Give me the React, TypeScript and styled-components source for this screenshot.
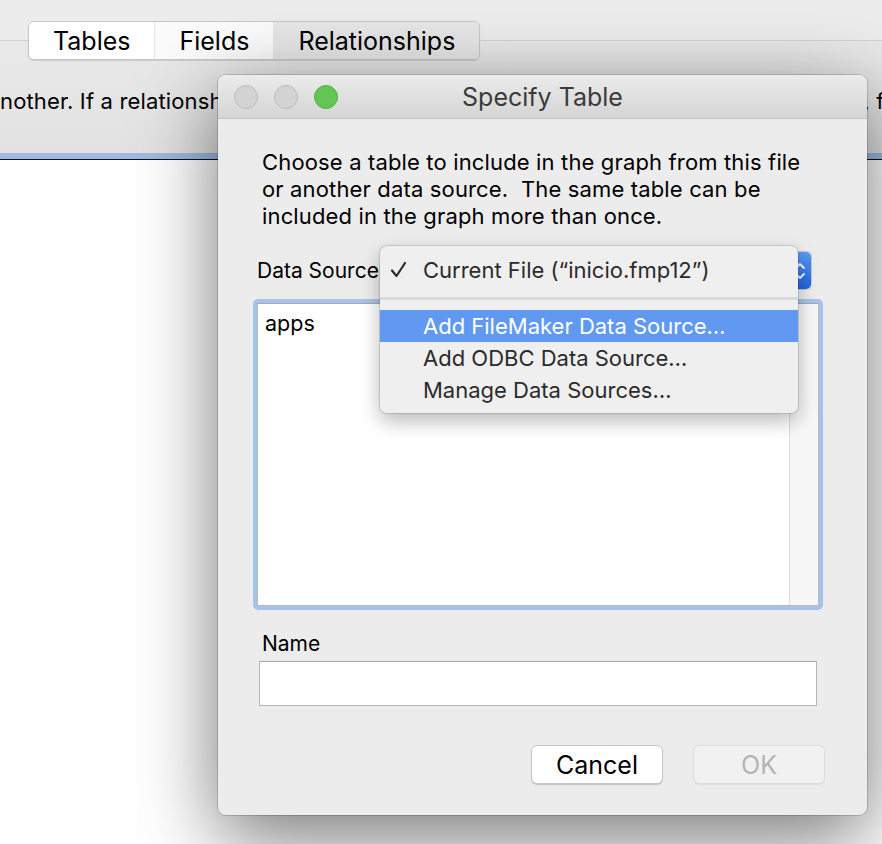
import React from "react";
import styled, { createGlobalStyle } from "styled-components";

const GlobalStyle = createGlobalStyle`
  html, body { margin: 0; padding: 0; }
  body {
    background: #ececec;
    font-family: Inter, "Noto Sans", "Liberation Sans", sans-serif;
    color: #000;
    -webkit-font-smoothing: antialiased;
  }
`;

const Page = styled.div`
  position: relative;
  width: 882px;
  height: 844px;
  overflow: hidden;
  display: flex;
  flex-direction: column;
  background: #fff;
`;

const Header = styled.div`
  height: 153px;
  display: flex;
  flex-direction: column;
  background:
    linear-gradient(#ececec 0, #ececec 40px, #d2d2d2 40px, #d2d2d2 41px, #e9e9e9 41px, #e2e2e2 153px);
`;

const Segmented = styled.div`
  margin: 21px 0 0 28px;
  align-self: flex-start;
  display: flex;
  height: 39px;
  border: 1px solid #c6c6c6;
  border-radius: 6px;
  overflow: hidden;
  box-shadow: 0 1px 1px rgba(0, 0, 0, 0.12);
  box-sizing: border-box;
`;

const Segment = styled.div<{ $selected?: boolean; $tint?: string }>`
  display: flex;
  align-items: center;
  padding: 0 24px;
  font-size: 25px;
  background: ${(p) => (p.$selected ? "#e6e6e6" : p.$tint || "#fff")};
  border-left: 1px solid #e4e4e4;
  &:first-child { border-left: none; }
`;

const InfoLine = styled.div`
  margin-top: 28px;
  display: flex;
  justify-content: space-between;
  white-space: nowrap;
  overflow: hidden;
  font-size: 22px;
  letter-spacing: 0.15px;
  line-height: 26px;
`;

const InfoTail = styled.span`
  margin-right: -8px;
`;

const BlueRule = styled.div`
  height: 6px;
  background: #9dbbe4;
  border-bottom: 1px solid #111;
`;

const Canvas = styled.div`
  flex: 1;
  background: #fff;
`;

const Dialog = styled.div`
  position: absolute;
  left: 218px;
  top: 75px;
  width: 649px;
  height: 740px;
  border-radius: 8px;
  background: #ececec;
  box-shadow: 0 0 0 1px rgba(0, 0, 0, 0.16), 0 22px 80px rgba(0, 0, 0, 0.55);
  display: flex;
  flex-direction: column;
`;

const TitleBar = styled.div`
  height: 44px;
  display: grid;
  grid-template-columns: 1fr auto 1fr;
  align-items: center;
  border-radius: 8px 8px 0 0;
  background: linear-gradient(#ebebeb, #d5d5d5);
  border-bottom: 1px solid #c4c4c4;
  box-sizing: border-box;
`;

const Lights = styled.div`
  display: flex;
  gap: 16px;
  padding-left: 16px;
`;

const Light = styled.div<{ $color: string; $edge: string }>`
  width: 24px;
  height: 24px;
  border-radius: 50%;
  box-sizing: border-box;
  background: ${(p) => p.$color};
  border: 1px solid ${(p) => p.$edge};
`;

const Title = styled.div`
  font-size: 25px;
  color: #3b3b3b;
  margin-top: 1px;
`;

const Body = styled.div`
  flex: 1;
  display: flex;
  flex-direction: column;
  padding-top: 30px;
`;

const Description = styled.p`
  margin: 0 0 0 44px;
  font-size: 22px;
  letter-spacing: 0.15px;
  line-height: 27px;
`;

const SourceRow = styled.div`
  margin: 22px 56px 0 39px;
  display: flex;
  align-items: center;
  gap: 10px;
  height: 37px;
`;

const Label = styled.div<{ $indent?: number; $top?: number }>`
  font-size: 21px;
  line-height: 24px;
  margin-left: ${(p) => p.$indent || 0}px;
  margin-top: ${(p) => p.$top || 0}px;
  white-space: nowrap;
`;

const Popup = styled.div`
  flex: 1;
  height: 37px;
  display: flex;
  justify-content: flex-end;
  background: #fff;
  border-radius: 5px;
  box-shadow: 0 0 0 1px #c8c8c8;
`;

const Stepper = styled.div`
  width: 22px;
  height: 37px;
  border-radius: 5px;
  background: linear-gradient(#5a9af7, #1f63df);
  display: flex;
  align-items: center;
  justify-content: center;
`;

const ListRing = styled.div`
  margin: 10px 44px 0 35px;
  height: 311px;
  border: 4px solid #a4c3ed;
  border-radius: 5px;
  box-sizing: border-box;
  display: flex;
  background: #fff;
`;

const ListInner = styled.div`
  flex: 1;
  display: flex;
  border: 1px solid #b9b9b9;
  border-top-color: #a9a9a9;
`;

const ListItems = styled.div`
  flex: 1;
  padding: 6px 7px;
  font-size: 21.5px;
  line-height: 26px;
`;

const Scrollbar = styled.div`
  width: 28px;
  background: #f7f7f7;
  border-left: 1px solid #dedede;
`;

const NameInput = styled.div`
  margin: 5px 50px 0 41px;
  height: 45px;
  box-sizing: border-box;
  background: #fff;
  border: 1px solid #b6b6b6;
  border-top-color: #a8a8a8;
`;

const Buttons = styled.div`
  margin: 39px 42px 0 0;
  display: flex;
  justify-content: flex-end;
  gap: 30px;
`;

const Button = styled.div<{ $disabled?: boolean }>`
  width: 132px;
  height: 39px;
  box-sizing: border-box;
  display: flex;
  align-items: center;
  justify-content: center;
  font-size: 25px;
  border-radius: 6px;
  background: ${(p) => (p.$disabled ? "#f1f1f1" : "#fff")};
  color: ${(p) => (p.$disabled ? "#b4b4b4" : "#000")};
  border: 1px solid ${(p) => (p.$disabled ? "#dcdcdc" : "#c6c6c6")};
  box-shadow: ${(p) => (p.$disabled ? "0 1px 0 rgba(0,0,0,0.05)" : "0 1px 1px rgba(0,0,0,0.18)")};
`;

const Menu = styled.div`
  position: absolute;
  left: 380px;
  top: 246px;
  width: 418px;
  box-sizing: border-box;
  padding: 8px 0 7px;
  background: #efefef;
  border-radius: 7px;
  box-shadow: 0 0 0 1px rgba(0, 0, 0, 0.12), 0 8px 20px rgba(0, 0, 0, 0.28);
  font-size: 22px;
  color: #2b2b2b;
  z-index: 2;
`;

const MenuItem = styled.div<{ $active?: boolean }>`
  position: relative;
  height: 32px;
  display: flex;
  align-items: center;
  padding-left: 43px;
  background: ${(p) => (p.$active ? "#6199f2" : "transparent")};
  color: ${(p) => (p.$active ? "#fff" : "#2b2b2b")};
  white-space: nowrap;
`;

const Check = styled.svg`
  position: absolute;
  left: 10px;
  top: 7px;
`;

const Separator = styled.div`
  height: 24px;
  display: flex;
  align-items: center;
  &::after {
    content: "";
    flex: 1;
    height: 3px;
    margin-top: 1px;
    background: #dadada;
  }
`;

export default function App() {
  return (
    <>
      <GlobalStyle />
      <Page>
        <Header>
          <Segmented>
            <Segment>Tables</Segment>
            <Segment $tint="#fbfbfb">Fields</Segment>
            <Segment $selected>Relationships</Segment>
          </Segmented>
          <InfoLine>
            <span>nother. If a relationship</span>
            <InfoTail>, fi</InfoTail>
          </InfoLine>
        </Header>
        <BlueRule />
        <Canvas />

        <Dialog>
          <TitleBar>
            <Lights>
              <Light $color="#d3d3d3" $edge="#bdbdbd" />
              <Light $color="#d3d3d3" $edge="#bdbdbd" />
              <Light $color="#62c554" $edge="#55b047" />
            </Lights>
            <Title>Specify Table</Title>
            <div />
          </TitleBar>
          <Body>
            <Description>
              Choose a table to include in the graph from this file
              <br />
              or another data source.&nbsp; The same table can be
              <br />
              included in the graph more than once.
            </Description>
            <SourceRow>
              <Label>Data Source:</Label>
              <Popup>
                <Stepper>
                  <svg width="12" height="22" viewBox="0 0 12 22">
                    <path d="M2 8 L6 4 L10 8 M2 14 L6 18 L10 14" stroke="#fff" strokeWidth="1.8" fill="none" strokeLinecap="round" strokeLinejoin="round" />
                  </svg>
                </Stepper>
              </Popup>
            </SourceRow>
            <ListRing>
              <ListInner>
                <ListItems>apps</ListItems>
                <Scrollbar />
              </ListInner>
            </ListRing>
            <Label $indent={44} $top={22}>Name</Label>
            <NameInput />
            <Buttons>
              <Button>Cancel</Button>
              <Button $disabled>OK</Button>
            </Buttons>
          </Body>
        </Dialog>

        <Menu>
          <MenuItem>
            <Check width="18" height="18" viewBox="0 0 18 18">
              <path d="M2 9.5 L6.5 15 L15 2" stroke="#2b2b2b" strokeWidth="2.2" fill="none" strokeLinecap="round" strokeLinejoin="round" />
            </Check>
            Current File (“inicio.fmp12”)
          </MenuItem>
          <Separator />
          <MenuItem $active>Add FileMaker Data Source…</MenuItem>
          <MenuItem>Add ODBC Data Source…</MenuItem>
          <MenuItem>Manage Data Sources…</MenuItem>
        </Menu>
      </Page>
    </>
  );
}
